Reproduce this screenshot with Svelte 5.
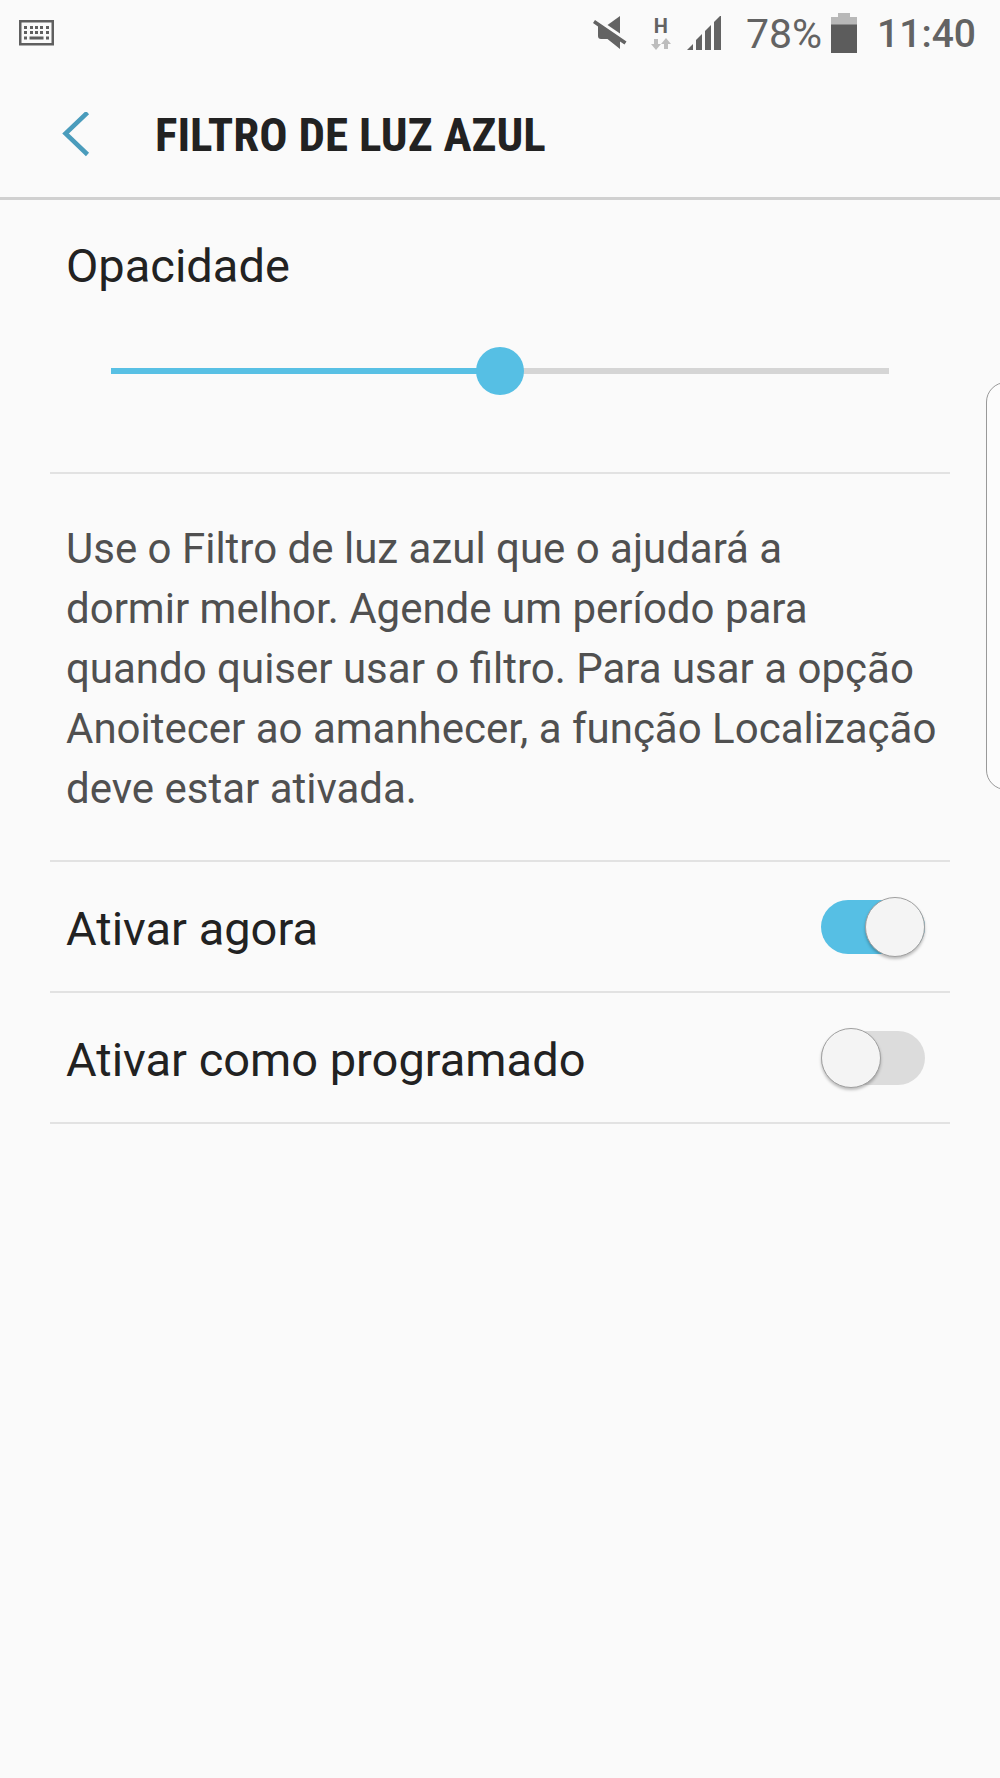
<script>
  let opacity = $state(50);
  let options = $state([
    { id: 'now', label: 'Ativar agora', on: true },
    { id: 'scheduled', label: 'Ativar como programado', on: false },
  ]);

  const keyColumns = [5, 11, 16, 21, 27];
</script>

<div class="screen">
  <div class="status-bar">
    <svg class="keyboard" width="36" height="28" viewBox="0 0 36 28">
      <rect x="1.25" y="1.25" width="32.5" height="23" fill="none" stroke="#5f5f5f" stroke-width="2.5" />
      <g fill="#5f5f5f">
        {#each keyColumns as x}
          <rect {x} y="6" width="3" height="3" />
          <rect {x} y="11" width="3" height="3" />
        {/each}
        <rect x="5" y="16.5" width="3" height="3" />
        <rect x="10.5" y="16.5" width="14" height="3" />
        <rect x="27" y="16.5" width="3" height="3" />
      </g>
    </svg>

    <svg width="34" height="36" viewBox="0 0 34 36">
      <g fill="#636363">
        <path d="M27 0V17.500L14.500 9Z" />
        <path d="M2 4L33.500 25.500L31.500 28.500L27 25.500V33L14.500 23H8Q5 23 5 20V10.500L0 7Z" />
      </g>
    </svg>
    <div class="network">
      <span>H</span>
      <svg width="20" height="12" viewBox="0 0 20 12" fill="#bdbdbd">
        <path d="M3 1H7V6H10L5 12L0 6H3Z" />
        <path d="M13 11V6H10L15 0L20 6H17V11Z" />
      </svg>
    </div>
    <svg class="signal" width="34" height="36" viewBox="0 0 34 36" fill="#636363">
      <path d="M0 34L6 28V34Z" />
      <path d="M9 34V24L15 18V34Z" />
      <path d="M18 34V15L24 9V34Z" />
      <path d="M27 34V6L33 0H34V34Z" />
    </svg>
    <span class="percent">78%</span>
    <svg class="battery" width="26" height="42" viewBox="0 0 26 42">
      <path d="M7 0H19V4H26V12H0V4H7Z" fill="#b8b8b8" />
      <rect y="11.500" width="26" height="28.500" fill="#5c5c5c" />
    </svg>
    <span class="clock">11:40</span>
  </div>

  <header>
    <button class="back" aria-label="Voltar">
      <svg width="28" height="46" viewBox="0 0 28 46">
        <path d="M25.500 0.500L3.500 21.500L25.500 42.500" fill="none" stroke="#4a9cbc" stroke-width="4.500" />
      </svg>
    </button>
    <h1>FILTRO DE LUZ AZUL</h1>
  </header>

  <main>
    <section class="opacity">
      <label for="opacity">Opacidade</label>
      <input id="opacity" type="range" min="0" max="100" bind:value={opacity} style="--fill: {opacity}%" />
    </section>

    <p>
      Use o Filtro de luz azul que o ajudará a<br />
      dormir melhor. Agende um período para<br />
      quando quiser usar o filtro. Para usar a opção
      Anoitecer ao amanhecer, a função Localização deve estar ativada.
    </p>

    {#each options as option (option.id)}
      <div class="row">
        <label for={option.id}>{option.label}</label>
        <input id={option.id} class="switch" type="checkbox" role="switch" bind:checked={option.on} />
      </div>
    {/each}
  </main>

  <div class="edge-handle"></div>
</div>

<style>
  :global(body) {
    background: #fafafa;
  }

  .screen {
    position: relative;
    min-height: 100vh;
    overflow: hidden;
    background: #fafafa;
    color: #222;
    font-family: Roboto, sans-serif;
  }

  .status-bar {
    display: flex;
    align-items: center;
    height: 72px;
    box-sizing: border-box;
    padding: 0 24px 4px 19px;
    color: #636363;
  }

  .keyboard {
    margin-right: auto;
  }

  .network {
    display: flex;
    flex-direction: column;
    align-items: center;
    gap: 4px;
    margin: 0 16px 0 24px;
  }

  .network span {
    font-size: 20px;
    font-weight: 700;
    line-height: 16px;
  }

  .percent {
    margin-left: 25px;
    font-size: 41px;
    line-height: 60px;
  }

  .battery {
    margin: 0 20px 0 9px;
  }

  .clock {
    font-size: 39px;
    font-weight: 500;
    line-height: 60px;
  }

  header {
    display: flex;
    align-items: center;
    height: 128px;
    box-sizing: border-box;
    padding-left: 62px;
    border-bottom: 3px solid #d0d0d0;
  }

  .back {
    display: flex;
    padding: 0;
    border: none;
    background: none;
    cursor: pointer;
  }

  h1 {
    margin: 0 0 0 65px;
    font-family: "Roboto Condensed", Roboto, sans-serif;
    font-size: 47px;
    font-weight: 700;
    line-height: 60px;
  }

  main {
    padding: 0 50px;
  }

  label {
    font-size: 47px;
    line-height: 60px;
  }

  .opacity {
    display: flex;
    flex-direction: column;
    padding: 36px 16px 77px;
    border-bottom: 2px solid #e2e2e2;
  }

  .opacity input {
    appearance: none;
    height: 48px;
    margin: 51px 45px 0;
    background: linear-gradient(to right, #58c0e4 var(--fill), #d5d5d5 var(--fill)) center / 100% 6px no-repeat;
    cursor: pointer;
  }

  .opacity input::-webkit-slider-thumb {
    appearance: none;
    width: 48px;
    height: 48px;
    border-radius: 50%;
    background: #56bfe4;
  }

  p {
    margin: 0;
    padding: 45px 8px 41px 16px;
    border-bottom: 2px solid #e2e2e2;
    color: #505050;
    font-size: 42px;
    line-height: 60px;
  }

  .row {
    display: flex;
    align-items: center;
    justify-content: space-between;
    min-height: 129px;
    padding: 0 25px 0 16px;
    border-bottom: 2px solid #e2e2e2;
  }

  .row label {
    padding-top: 4px;
  }

  .switch {
    appearance: none;
    display: flex;
    align-items: center;
    width: 104px;
    height: 54px;
    margin: 0;
    border-radius: 27px;
    background: #dcdcdc;
    cursor: pointer;
  }

  .switch::before {
    content: "";
    flex: none;
    width: 60px;
    height: 60px;
    box-sizing: border-box;
    border: 1px solid #a0a0a0;
    border-radius: 50%;
    background: #f4f4f4;
    box-shadow: 0 2px 3px rgba(0, 0, 0, 0.25);
  }

  .switch:checked {
    justify-content: flex-end;
    background: #56bfe4;
  }

  .edge-handle {
    position: absolute;
    top: 382px;
    right: -16px;
    width: 30px;
    height: 408px;
    box-sizing: border-box;
    border: 1px solid #999;
    border-radius: 20px 0 0 20px;
    background: #fcfcfc;
  }
</style>
